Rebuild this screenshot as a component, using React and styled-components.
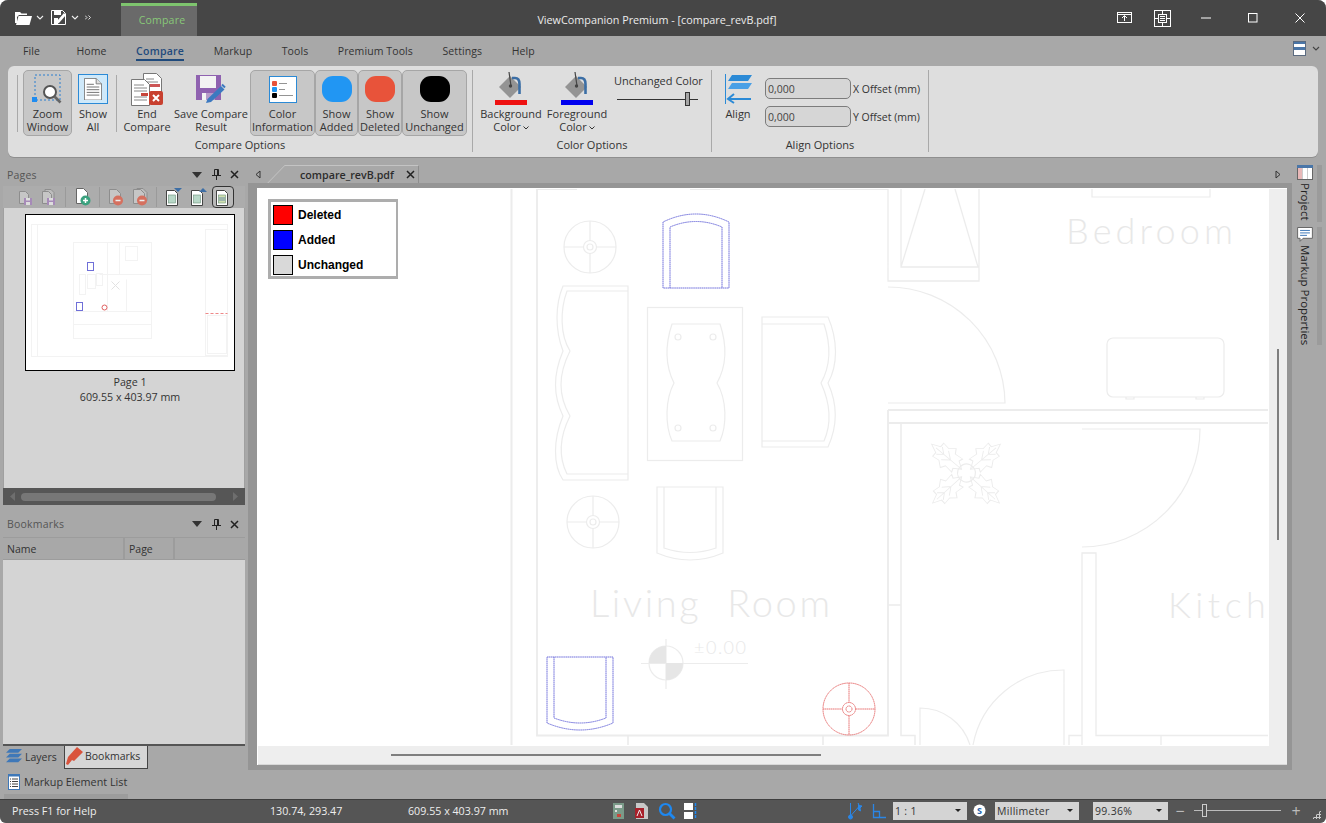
import React from "react";
import styled, { createGlobalStyle } from "styled-components";

const Global = createGlobalStyle`
  html, body { margin: 0; padding: 0; background: #fff; }
  body { font-family: "Open Sans", "Noto Sans", sans-serif; }
`;

const UI = `"Open Sans", "Noto Sans", sans-serif`;

const Window = styled.div`
  width: 1326px; height: 823px; display: flex; flex-direction: column; overflow: hidden;
  background: #a8a8a8; border-radius: 8px 8px 6px 6px; font-family: ${UI}; color: #333;
  font-size: 11px;
`;

/* ---------- title bar ---------- */
const TitleBar = styled.header`height: 36px; flex: none; background: #464646; display: flex; align-items: stretch;`;
const TitleLeft = styled.div`width: 197px; flex: none; display: flex; align-items: flex-start;`;
const Qat = styled.div`width: 121px; height: 35px; display: flex; align-items: center; padding-left: 15px; box-sizing: border-box;`;
const QatBtn = styled.span`display: inline-flex; align-items: center; margin-left: ${p => p.$ml || 0}px;`;
const ContextTab = styled.div`
  width: 76px; height: 33px; margin-top: 3px; border-top: 3px solid #7ec46e; box-sizing: border-box; padding: 0 0 2px 6px;
  background: #6a6a6a; color: #88c878; display: flex; align-items: center; justify-content: center; font-size: 10.5px; letter-spacing: .2px;
`;
const Title = styled.div`flex: 1; text-align: center; color: #ececec; line-height: 40px; font-size: 10.8px;`;
const WinControls = styled.div`width: 209px; flex: none; display: flex; align-items: center;`;
const WinBtn = styled.span`display: inline-flex; justify-content: center; width: ${p => p.$w}px;`;

/* ---------- menu ---------- */
const MenuBar = styled.nav`height: 30px; flex: none; display: flex; align-items: flex-start; padding-left: 23px; gap: 29.5px; position: relative; background: #a8a8a8;`;
const MenuItem = styled.span`
  height: 25px; box-sizing: border-box; line-height: 30px; font-size: 10.5px; color: ${p => p.$active ? "#1f4a7c" : "#333"};
  font-weight: ${p => p.$active ? 600 : 400}; margin-left: ${p => p.$ml || 0}px; letter-spacing: ${p => p.$active ? ".25px" : ".1px"};
  border-bottom: 2px solid ${p => p.$active ? "#1f4a7c" : "transparent"};
`;
const MenuRight = styled.div`position: absolute; right: 6px; top: 5px; display: flex; align-items: center; gap: 6px;`;

/* ---------- ribbon ---------- */
const Ribbon = styled.section`
  height: 91px; flex: none; margin: 0 8px; box-sizing: border-box; padding-top: 4px; background: #dedede;
  border-radius: 6px; display: flex; box-shadow: 0 1px 0 #8f8f8f;
`;
const Group = styled.div`
  width: ${p => p.$w}px; flex: none; box-sizing: border-box; border-right: 1px solid #a9a9a9; height: 82px;
  display: flex; flex-direction: column;
`;
const GroupBody = styled.div`height: 66px; display: flex; align-items: flex-start; padding-left: ${p => p.$pl || 0}px;`;
const GroupLabel = styled.div`
  margin-top: 2px; line-height: 14px; text-align: center; font-size: 11px; color: #333; padding-left: ${p => p.$pl || 0}px;
`;
const RibbonSep = styled.span`width: 1px; height: 57px; margin: 5px ${p => p.$mr || 0}px 0 ${p => p.$ml || 0}px; background: #a9a9a9; flex: none;`;
const RibbonBtn = styled.div`
  width: ${p => p.$w}px; height: 66px; flex: none; box-sizing: border-box; margin-left: ${p => p.$ml || 0}px;
  border: 1px solid ${p => p.$on ? "#a6a6a6" : "transparent"}; border-radius: 5px;
  background: ${p => p.$on ? "#c7c7c7" : "transparent"};
  display: flex; flex-direction: column; align-items: center;
`;
const IconSlot = styled.div`height: 36px; flex: none; width: 100%; display: flex; align-items: center; justify-content: center;`;
const BtnLabel = styled.div`line-height: 13px; font-size: 11px; text-align: center; white-space: pre; color: #333;`;
const ChevronMark = styled.svg`margin-left: 2px; vertical-align: 1px;`;

const SliderBlock = styled.div`width: 92px; margin-left: 5px; display: flex; flex-direction: column; align-items: flex-start;`;
const SliderLabel = styled.div`line-height: 14px; margin-top: 4px; font-size: 11px; white-space: nowrap;`;
const Track = styled.div`position: relative; width: 81px; height: 1px; background: #333; margin: 11px 0 0 3px;`;
const Thumb = styled.span`
  position: absolute; left: ${p => p.$left}px; top: -7px; width: 5px; height: 14px; box-sizing: border-box;
  background: #a5a5a5; border: 1px solid #333;
`;
const OffsetGrid = styled.div`
  display: grid; grid-template-columns: 86px auto; grid-auto-rows: 21px; row-gap: 7px; column-gap: 2px; margin: 8px 0 0 7px; align-items: center;
`;
const OffsetField = styled.div`
  height: 21px; box-sizing: border-box; border: 1px solid #7c7c7c; border-radius: 5px; background: #d6d6d6;
  line-height: 20px; padding-left: 2px; font-size: 10.5px; color: #444;
`;
const OffsetLabel = styled.span`font-size: 10.5px; white-space: nowrap; padding-top: 1px;`;

/* ---------- main ---------- */
const Main = styled.main`flex: 1; min-height: 0; display: flex;`;
const LeftCol = styled.aside`width: 248px; flex: none; box-sizing: border-box; padding: 8px 3px 0 3px; display: flex; flex-direction: column;`;
const PanelHead = styled.div`height: 20px; display: flex; align-items: center; padding: 0 6px 0 4px; color: #555; font-size: 10.5px; letter-spacing: .2px;`;
const HeadTitle = styled.span`flex: 1;`;
const HeadIcons = styled.span`display: flex; align-items: center; gap: 9px;`;
const PageTools = styled.div`height: 22px; margin-top: 1px; display: flex; align-items: center; padding-left: 11px; background: #acacac;`;
const ToolCell = styled.span`
  width: 22px; height: 22px; flex: none; display: inline-flex; align-items: center; justify-content: center; box-sizing: border-box;
  margin-left: ${p => p.$ml || 0}px; border-radius: 4px; border: 1px solid ${p => p.$on ? "#333" : "transparent"};
  background: ${p => p.$on ? "#b9b9b9" : "transparent"};
`;
const ToolSep = styled.span`width: 1px; height: 20px; flex: none; background: #9a9a9a; margin: 0 ${p => p.$mr}px 0 ${p => p.$ml}px;`;
const ThumbArea = styled.div`height: 281px; background: #d4d4d4; display: flex; flex-direction: column; align-items: center; padding: 6px 0 0 12px; box-sizing: border-box; border: solid #a0a0a0; border-width: 0 1px;`;
const PageThumb = styled.div`width: 210px; height: 157px; box-sizing: border-box; border: 1.5px solid #000; background: #fff; flex: none;`;
const PageCaption = styled.div`margin-top: 4px; line-height: 15px; font-size: 10.7px; text-align: center; color: #333;`;
const DarkScroll = styled.div`height: 17px; background: #565656; display: flex; align-items: center; padding: 0 7px; gap: 5px;`;
const DarkThumb = styled.span`flex: 1; height: 8px; margin-right: 11px; background: #777; border-radius: 4px;`;
const PanelGap = styled.div`height: 9px;`;
const ColHead = styled.div`height: 23px; margin-top: 3px; display: flex; gap: 2px; box-sizing: border-box; background: #9c9c9c; padding: 1px 0;`;
const Col = styled.div`
  width: ${p => p.$w}px; flex: ${p => p.$grow ? 1 : "none"}; box-sizing: border-box; padding-left: 4px; line-height: 23px;
  background: #a8a8a8; font-size: 10.5px; color: #333;
`;
const ListArea = styled.div`height: 184px; background: #d4d4d4; border-bottom: 2px solid #555;`;
const PaneTabs = styled.div`height: 23px; display: flex; padding-left: 1px;`;
const PaneTab = styled.div`
  display: flex; align-items: center; gap: 2px; box-sizing: border-box; width: ${p => p.$w}px; height: 23px; padding: 0 0 2px 1px; font-size: 10.5px;
  ${p => p.$on ? "background:#d6d6d6;border:1px solid #444;border-top:none;" : ""}
`;
const ElementList = styled.div`
  width: 124px; height: 28px; margin: 2px 0 0 1px; display: flex; align-items: flex-start; gap: 4px; padding: 3px 0 0 4px; box-sizing: border-box;
  font-size: 10.8px; border-bottom: 5px solid #9c9c9c; color: #333; white-space: nowrap; line-height: 16px;
`;

/* ---------- doc area ---------- */
const DocCol = styled.div`flex: 1; min-width: 0; display: flex; flex-direction: column; padding-top: 8px; box-sizing: border-box; height: 613px;`;
const TabStrip = styled.div`height: 18px; flex: none; display: flex; align-items: center; position: relative;`;
const ArrowBtn = styled.span`width: 20px; display: inline-flex; justify-content: center;`;
const DocTab = styled.div`
  position: relative; margin-left: 17px; width: 134px; height: 18px; box-sizing: border-box; border-top: 1px solid #c4c4c4; border-right: 1px solid #8e8e8e;
  display: flex; align-items: center; padding-left: 15px; justify-content: space-between; padding-right: 3px;
  font-size: 10.7px; font-weight: 600; color: #2c2c2c;
  &::before { content: ""; position: absolute; left: -9px; top: -1px; width: 17px; height: 18px; border-left: 1px solid #c4c4c4; transform: skewX(-44deg); }
`;
const StripSpace = styled.span`flex: ${p => p.$fixed ? `0 0 ${p.$fixed}px` : 1};`;
const Band = styled.div`flex: 1; min-height: 0; background: #959595; padding: 5px 5px 5px 9px; display: flex;`;
const Canvas = styled.div`flex: 1; position: relative; background: #fff; border-left: 1px solid #fff; border-top: 1px solid #fff; display: flex; flex-direction: column; overflow: hidden;`;
const CanvasTop = styled.div`flex: 1; min-height: 0; display: flex;`;
const Sheet = styled.svg`flex: none; display: block; fill: none; stroke: #ececec; stroke-width: 1;`;
const VScroll = styled.div`flex: 1; background: #eee; position: relative;`;
const VThumb = styled.span`position: absolute; left: 8px; top: 160px; width: 2px; height: 191px; background: #7f7f7f;`;
const HScroll = styled.div`height: 18px; flex: none; background: #eee; position: relative; border-bottom: 1px solid #d8d8d8;`;
const HThumb = styled.span`position: absolute; left: 133px; top: 8px; height: 2px; width: 430px; background: #7f7f7f;`;
const Legend = styled.div`
  position: absolute; left: 10px; top: 10px; width: 130px; height: 80px; box-sizing: border-box; border: 3px solid #adadad; border-right-width: 2px; background: #fff; padding: 3px 2px 0;
  display: flex; flex-direction: column; gap: 5px;
`;
const LegendRow = styled.div`display: flex; align-items: center; gap: 5px; height: 20px; font: bold 12px "Liberation Sans", Arial, sans-serif; color: #000;`;
const Swatch = styled.span`width: 20px; height: 20px; box-sizing: border-box; border: 1px solid #000; background: ${p => p.$c};`;

/* ---------- right rail ---------- */
const Rail = styled.div`width: 34px; flex: none; padding-top: 8px; box-sizing: border-box; display: flex; flex-direction: column; gap: 5px;`;
const RailTab = styled.div`
  height: ${p => p.$h}px; position: relative; display: flex; flex-direction: column; align-items: flex-start; padding-left: 5px;
  &::after { content: ""; position: absolute; right: 4px; top: 0; bottom: 0; width: 5px; background: #9b9b9b; }
`;
const RailText = styled.span`writing-mode: vertical-rl; font-size: 11.5px; color: #222; margin: 3px 0 0 0; line-height: 16px; white-space: nowrap;`;

/* ---------- status bar ---------- */
const StatusBar = styled.footer`height: 24px; flex: none; background: #555; display: flex; align-items: center; color: #eee; font-size: 10.7px; padding: 0 0 2px 12px; position: relative; border-top: 1px solid #3e3e3e; box-sizing: border-box;`;
const StatusCell = styled.span`width: ${p => p.$w}px; flex: none; white-space: nowrap;`;
const StatusIcons = styled.span`display: flex; align-items: center; gap: ${p => p.$gap}px; flex: none; margin-left: ${p => p.$ml || 0}px;`;
const Combo = styled.div`
  width: ${p => p.$w}px; height: 18px; flex: none; box-sizing: border-box; margin-left: ${p => p.$ml}px; background: #d4d4d4; color: #333;
  display: flex; align-items: center; justify-content: space-between; padding: 0 6px 0 2px; font-size: 10.5px; letter-spacing: .3px;
`;
const ComboCaret = styled.span`width: 0; height: 0; border: 3px solid transparent; border-top: 3.5px solid #222; border-bottom: 0;`;
const ZoomTrack = styled.div`position: relative; width: 87px; height: 1px; background: #bbb; margin-left: 9px; flex: none;`;
const ZoomThumb = styled.span`position: absolute; left: 8px; top: -6px; width: 5px; height: 13px; box-sizing: border-box; background: #555; border: 1px solid #ccc;`;
const StatusGlyph = styled.span`color: #bbb; font-size: 16px; line-height: 18px; margin-left: ${p => p.$ml}px; width: 10px; text-align: center;`;

/* ---------- icons ---------- */
const Chev = ({ c = "#eee", w = 8 }) => (
  <svg width={w} height="5" viewBox="0 0 8 5" fill="none"><path d="M1 1l3 3 3-3" stroke={c} strokeWidth="1.1" /></svg>
);
const FolderIcon = () => (
  <svg width="17" height="15" viewBox="0 0 17 15"><path d="M0 2h5l1.5 1.5H12V5H4L2 7v6H0z" fill="#fff" /><path d="M3.5 6H17l-2.5 9H1z" fill="#fff" /></svg>
);
const SaveAsIcon = () => (
  <svg width="16" height="15" viewBox="0 0 16 15"><path d="M.5.5h11l3 3v11H.5z" fill="#464646" stroke="#fff" /><rect x="3" y="1" width="7" height="4" fill="#fff" /><path d="M5 14l1-3 7-8 2 2-7 8z" fill="#fff" /><rect x="3" y="8" width="4" height="6" fill="#fff" /></svg>
);
const PromoteIcon = () => (
  <svg width="16" height="14" viewBox="0 0 16 14" fill="none" stroke="#fff"><rect x=".5" y="1.5" width="14" height="10" /><path d="M1 3.5h13" /><path d="M7.5 10V5M5 7l2.5-2.5L10 7" /></svg>
);
const FitIcon = () => (
  <svg width="17" height="17" viewBox="0 0 17 17" fill="none" stroke="#fff"><rect x=".5" y=".5" width="16" height="16" /><rect x="4.5" y="4.5" width="8" height="8" /><path d="M6 6.5h5M6 8.5h5M6 10.5h5M8.5 1v3M8.5 13v3M1 8.5h3M13 8.5h3" /></svg>
);
const ZoomWinIcon = () => (
  <svg width="32" height="32" viewBox="0 0 32 32" fill="none"><rect x="3" y="2" width="25" height="25" stroke="#2a7fd0" strokeDasharray="2 2" /><rect x="0" y="24" width="5" height="5" fill="#1f8cf0" /><circle cx="18" cy="19" r="6" fill="#fff" stroke="#555" strokeWidth="2" /><path d="M22.5 23.5l6 6" stroke="#666" strokeWidth="2.6" /></svg>
);
const DocLines = ({ s = 1 }) => (
  <svg width={20 * s} height={25 * s} viewBox="0 0 20 25"><path d="M.5.5h13l6 6v18H.5z" fill="#fff" stroke="#777" /><path d="M13.5.5v6h6" fill="#e0e0e0" stroke="#777" /><path d="M3 7h8M3 10h14M3 13h14M3 16h14M3 19h14" stroke="#666" /></svg>
);
const ShowAllBox = styled.span`width: 30px; height: 30px; box-sizing: border-box; display: flex; align-items: center; justify-content: center; background: #cfe9fa; border: 1px solid #2b8ad6;`;
const EndCompareIcon = () => (
  <svg width="33" height="33" viewBox="0 0 33 33"><path d="M12.500.5h13l5 5v22h-18z" fill="#fff" stroke="#777" /><path d="M15 6h8M15 9h12" stroke="#888" /><rect x="17" y="11" width="12" height="3" fill="#c55" /><path d="M.5 6.500h13l5 5v21H.5z" fill="#fff" stroke="#777" /><path d="M3 12h10M3 15h13M3 18h13M3 24h13M3 27h13" stroke="#888" /><rect x="10" y="20" width="7" height="3" fill="#c8453a" /><rect x="18" y="18" width="14" height="14" rx="2" fill="#c8402f" /><path d="M22 22l6 6M28 22l-6 6" stroke="#fff" strokeWidth="2" /></svg>
);
const SaveResultIcon = () => (
  <svg width="31" height="29" viewBox="0 0 31 29"><path d="M0 0h25v25H0z" fill="#8f62b0" /><rect x="4" y="1" width="16" height="12" fill="#f3f3f3" /><rect x="6" y="18" width="4" height="7" fill="#f3f3f3" /><rect x="10" y="18" width="9" height="7" fill="#b79ac9" /><path d="M10 28l1.500-4L25 11l3.500 3.500L15 27z" fill="#3c79c0" /><path d="M26 9.500l3 3" stroke="#3c79c0" strokeWidth="2" /></svg>
);
const ColorInfoIcon = () => (
  <svg width="28" height="27" viewBox="0 0 28 27"><rect x=".5" y=".5" width="27" height="26" fill="#fff" stroke="#2b8ad6" /><rect x="3" y="5" width="5" height="5" rx="1" fill="#e8533a" /><rect x="3" y="11" width="5" height="5" rx="1" fill="#2196f3" /><rect x="3" y="17" width="5" height="5" rx="1" fill="#000" /><path d="M10 7.500h8M10 13.500h6M10 19.500h14" stroke="#888" strokeWidth=".9" /></svg>
);
const Blob = styled.span`width: 30px; height: 26px; border-radius: 11px; background: ${p => p.$c}; display: block;`;
const BucketIcon = ({ bar }) => (
  <svg width="32" height="34" viewBox="0 0 32 34"><path d="M4 15l11-11 11 11-11 11z" fill="#949494" /><path d="M14 0l2 14" stroke="#444" strokeWidth="1.200" /><circle cx="15.500" cy="14" r="1.700" fill="#444" /><path d="M17 6h3c4 0 4.500 3 4.500 6v10" fill="none" stroke="#3b6ea5" strokeWidth="2.600" /><rect x="0" y="28" width="32" height="5" fill={bar} /></svg>
);
const AlignIcon = () => (
  <svg width="27" height="31" viewBox="0 0 27 31"><path d="M.5 0v30" stroke="#2b8ad6" /><path d="M7 1h20l-4 6H3z" fill="#2b8ad6" /><path d="M7 9h20l-4 6H3z" fill="#4aa0e6" /><path d="M3 25h23M9 20l-6 5 6 4" fill="none" stroke="#2b8ad6" strokeWidth="2" /></svg>
);
const LayoutIcon = () => (
  <svg width="13" height="15" viewBox="0 0 13 15"><rect width="13" height="15" fill="#fff" /><rect width="13" height="3" fill="#4a76a8" /><rect y="6" width="13" height="3" fill="#4a76a8" /><rect x=".5" y=".5" width="12" height="14" fill="none" stroke="#5b6b80" /></svg>
);
const DropTri = () => <svg width="12" height="6" viewBox="0 0 12 6"><path d="M1 0h10L6 6z" fill="#333" /></svg>;
const Pin = () => <svg width="9" height="11" viewBox="0 0 9 11" fill="none" stroke="#222"><path d="M2.500.5h4v6h-4zM0 6.500h9M4.500 7v4" /><path d="M5.500 1v5" /></svg>;
const CloseX = ({ c = "#222" }) => <svg width="9" height="9" viewBox="0 0 9 9"><path d="M1 1l7 7M8 1L1 8" stroke={c} strokeWidth="1.500" /></svg>;
const GrayDocSave = ({ two }) => (
  <svg width="16" height="16" viewBox="0 0 16 16">{two && <path d="M5 .5h6l3 3v7H5z" fill="#bdbdbd" stroke="#8d8d8d" />}<path d="M2.500 2.500h6l3 3v9h-9z" fill="#c6c6c6" stroke="#8d8d8d" /><rect x="7" y="9" width="8" height="7" fill="#a68ab8" /><rect x="9" y="9" width="4" height="2.500" fill="#ddd" /><rect x="9" y="13" width="4" height="3" fill="#ddd" /></svg>
);
const AddDoc = () => (
  <svg width="16" height="18" viewBox="0 0 16 18"><path d="M1.500.5h7l4 4v11h-11z" fill="#fff" stroke="#666" /><circle cx="10.500" cy="12.500" r="5" fill="#3aa17e" /><path d="M8 12.500h5M10.500 10v5" stroke="#fff" strokeWidth="1.500" /></svg>
);
const RemoveDoc = ({ two }) => (
  <svg width="17" height="18" viewBox="0 0 17 18">{two && <path d="M5 .5h6l4 4v8H5z" fill="#bdbdbd" stroke="#8d8d8d" />}<path d="M1.500 1.500h7l4 4v10h-11z" fill="#c6c6c6" stroke="#8d8d8d" /><circle cx="10" cy="12.500" r="5" fill="#d5705f" /><path d="M7.500 12.500h5" stroke="#eee" strokeWidth="1.500" /></svg>
);
const PictDoc = ({ arrow, on }) => (
  <svg width="17" height="18" viewBox="0 0 17 18"><path d="M1.500 2.500h8l3 3v12h-11z" fill="#fff" stroke="#444" /><rect x="3.500" y="7" width="7" height="8" fill={on ? "#cfe0b0" : "#b8d8c8"} stroke="#6b8f7a" strokeWidth=".6" />{arrow && <path d={arrow === "down" ? "M9 0h8l-4 4z" : "M13 0l4 4H9z"} fill="#3d6ea5" />}{on && <path d="M4 10h6M4 12h6" stroke="#6a8aa8" />}</svg>
);
const LayersIcon = () => (
  <svg width="18" height="17" viewBox="0 0 19 18"><path d="M5 1h13l-4 4H1z" fill="#3f78b8" /><path d="M5 6h13l-4 4H1z" fill="#3f78b8" /><path d="M5 11h13l-4 4H1z" fill="#3f78b8" /></svg>
);
const BookmarkIcon = () => (
  <svg width="17" height="18" viewBox="0 0 17 18"><path d="M11 0l6 5-9 9-2-1-4 5-2-1 2-7z" fill="#d9533c" /></svg>
);
const ListIcon = () => (
  <svg width="12" height="16" viewBox="0 0 12 16"><rect width="12" height="16" fill="#fff" /><rect width="12" height="2.500" fill="#3f78b8" /><path d="M.5 0v16M11.500 0v16M.5 15.500h11" stroke="#3f78b8" /><path d="M2 5h1M4 5h6M2 7.500h1M4 7.500h6M2 10h1M4 10h6M2 12.500h1M4 12.500h6" stroke="#444" /></svg>
);
const ProjectIcon = () => (
  <svg width="16" height="15" viewBox="0 0 16 15"><rect x=".5" y=".5" width="15" height="14" fill="#fff" stroke="#666" /><rect width="16" height="3" fill="#4a76a8" /><rect x="1" y="3" width="4" height="11" fill="#e8b8b8" /><path d="M5.500 3v11M10.500 3v11" stroke="#ccc" /></svg>
);
const MarkupPropIcon = () => (
  <svg width="16" height="15" viewBox="0 0 16 15"><path d="M.5.500h15v11H6l-3 3v-3H.5z" fill="#fff" stroke="#666" /><path d="M3 3.500h10M3 6h10M3 8.500h7" stroke="#3f78b8" /></svg>
);
const TinyTri = ({ dir, c = "#333" }) => (
  <svg width="6" height="9" viewBox="0 0 6 9" fill="none"><path d={dir === "left" ? "M5 1L1 4.500 5 8z" : "M1 1l4 3.500L1 8z"} stroke={c} /></svg>
);
const ScrollArrow = ({ dir }) => <svg width="6" height="9" viewBox="0 0 6 9"><path d={dir === "left" ? "M5 0v9L0 4.500z" : "M1 0v9L6 4.500z"} fill="#6e6e6e" /></svg>;
const SIcon1 = () => <svg width="14" height="18" viewBox="0 0 14 18"><rect x="1" y="1" width="11" height="16" fill="#7a9a88" /><rect x="3" y="3" width="7" height="3" fill="#ddd" /><rect x="3" y="8" width="2" height="2" fill="#ddd" /><rect x="5" y="12" width="4" height="3" fill="#c8453a" /></svg>;
const SIcon2 = () => <svg width="16" height="18" viewBox="0 0 16 18"><path d="M2 1h8l4 4v12H2z" fill="#c8c8c8" /><rect x="1" y="6" width="9" height="10" fill="#a8202a" /><path d="M3 14l2.500-6L8 14" fill="none" stroke="#eee" /></svg>;
const SIcon3 = () => <svg width="18" height="18" viewBox="0 0 18 18" fill="none"><circle cx="7.500" cy="7.500" r="5.500" stroke="#1e88f0" strokeWidth="2.200" /><path d="M11.500 11.500l5 5" stroke="#1e88f0" strokeWidth="2.800" /></svg>;
const SIcon4 = () => <svg width="13" height="18" viewBox="0 0 13 18"><rect x="0" y="1" width="9" height="7" fill="#fff" /><rect x="0" y="10" width="9" height="7" fill="#fff" /><path d="M11.500 1v16" stroke="#1e88f0" strokeWidth="1.500" strokeDasharray="3 1" /></svg>;
const SnapIcon = () => <svg width="16" height="18" viewBox="0 0 16 18" fill="none" stroke="#2a86e6"><path d="M3.500 1v14M3.500 14l9-10" /><circle cx="3.500" cy="15" r="2" fill="#2a86e6" /><path d="M11 1l1.200 2.500L15 4l-2 2 .5 3-2.500-1.500" fill="#2a86e6" /></svg>;
const OrthoIcon = () => <svg width="14" height="16" viewBox="0 0 14 16" fill="none" stroke="#2a86e6" strokeWidth="1.300"><path d="M1.500 1v13.500H14M1.500 8.500h6v6" /></svg>;
const SCircle = () => <svg width="13" height="13" viewBox="0 0 13 13"><circle cx="6.500" cy="6.500" r="6" fill="#fff" /><text x="6.500" y="9.700" fontSize="9" fontWeight="700" fontFamily="Open Sans" textAnchor="middle" fill="#1e5fa8">S</text></svg>;
const Grip = styled.span`
  position: absolute; right: 5px; bottom: 4px; width: 9px; height: 9px;
  background: radial-gradient(circle, #ccc 1px, transparent 1.2px) 0 0 / 3px 3px;
  clip-path: polygon(100% 0, 100% 100%, 0 100%);
`;

/* ---------- drawing ---------- */
const Lamp = ({ x, y, c, dash }) => (
  <g stroke={c} strokeDasharray={dash}>
    <circle cx={x} cy={y} r="26" />
    <circle cx={x} cy={y} r="6.500" />
    <circle cx={x} cy={y} r="3" />
    <path d={`M${x - 26} ${y}h19.500M${x + 6.500} ${y}h19.500M${x} ${y - 26}v19.500M${x} ${y + 6.500}v19.500`} />
  </g>
);
const Leaf = ({ r, s = 1 }) => (
  <g transform={`translate(966 473) rotate(${r}) scale(${0.95 * s} 1.45)`} strokeWidth=".8">
    <path d="M0-4L-5-9-9-8-8-14-13-16-8-20-9-25-4-25 0-31 4-25 9-25 8-20 13-16 8-14 9-8 5-9z" />
    <path d="M0-4V-27M0-14L-6-19M0-14L6-19M0-20L-5-24M0-20L5-24" />
  </g>
);
const BLUE = "#7272dc";
const Drawing = () => (
  <Sheet width="1011" height="556" viewBox="258 189 1011 556">
    <g strokeWidth="1.200">
      <path d="M511.500 189V745" strokeWidth="2" />
      <path d="M537 189V735.500H888V410" strokeWidth="1.800" />
      <path d="M537 189.500h40M690 189.500h30M810 189.500h78" />
      <path d="M628 735.500V745M823 735.500V745" strokeWidth="1.600" />
      <path d="M901 423V735.500H915V745M888 605H901" strokeWidth="1.500" />
      {/* closet */}
      <path d="M888 189V281H979V189M901 189V267H979M901 267L925 189M978 267L955 189" strokeWidth="1.300" />
      {/* upper door */}
      <path d="M888 287A117 117 0 0 1 1005 403H888" />
      <path d="M888 410H1268M888 423H1268" strokeWidth="1.800" />
      <path d="M1092 189V197H1210V189" />
      <rect x="1107" y="338" width="117" height="59" rx="6" />
      <path d="M1126 397v2h8v-2M1196 397v2h8v-2" />
      {/* lower doors */}
      <path d="M1082 429H1200A118 118 0 0 1 1082 547" />
      <path d="M1082 745V735.500H1069V745M1082 735.500V553H1096V735.500H1268M1161 735.500V745" strokeWidth="1.300" />
      <path d="M920 745V708A52 52 0 0 1 970 745" />
      <path d="M1064 745V670A92 92 0 0 0 973 745" />
      {/* furniture */}
      <path d="M628 286H563C555 305 555 330 563 351C553 375 553 395 563 416C553 440 553 465 563 480H628Z" />
      <path d="M628 291H567C560 310 560 335 570 351C558 375 558 395 570 416C558 440 560 460 567 474H628" />
      <rect x="647.500" y="307.500" width="95" height="153" />
      <path d="M672 324H720C727 345 727 365 717 383C727 400 727 425 720 441H672C665 425 665 400 674 383C665 365 665 345 672 324Z" />
      <circle cx="678" cy="337" r="3" /><circle cx="713" cy="337" r="3" /><circle cx="678" cy="428" r="3" /><circle cx="713" cy="428" r="3" />
      <path d="M762 317H828C838 340 838 365 828 383C838 405 838 425 828 447H762Z" />
      <path d="M762 324H824C831 345 831 365 821 383C831 405 831 425 824 441H762" />
      <path d="M657 487H723V553Q690 567 657 553ZM664 487V548Q690 557 716 548V487" />
      <Lamp x={590} y={247} c="#ececec" />
      <Lamp x={593} y={522} c="#ececec" />
      {/* datum */}
      <circle cx="666" cy="663" r="17" />
      <path d="M641 663.500H748M666 639V689" />
      <path d="M666 663V646A17 17 0 0 0 649 663ZM666 663V680A17 17 0 0 0 683 663Z" fill="#e6e6e6" stroke="none" />
      {/* plant */}
      <Leaf r={-50} /><Leaf r={50} /><Leaf r={132} /><Leaf r={-132} />
      <path d="M958 470A9 9 0 0 1 975 476A9 9 0 0 1 958 470" />
    </g>
    <g stroke={BLUE} strokeDasharray="1.500 .4">
      <path d="M663 288V222Q696 206 729 222V288ZM670 288V227Q696 216 722 227V288" />
      <path d="M547 657H613V723Q580 737 547 723ZM554 657V718Q580 728 606 718V657" />
    </g>
    <Lamp x={849} y={709} c="#e87474" dash="1.500 .4" />
    <g fill="#e8e8e8" stroke="none" fontFamily="Lato, 'Open Sans', sans-serif" fontWeight="300">
      <text x="590" y="617" fontSize="38" textLength="240" style={{ whiteSpace: "pre" }}>Living  Room</text>
      <text x="1066" y="244" fontSize="36" textLength="167">Bedroom</text>
      <text x="1168" y="618" fontSize="36" letterSpacing="4.500">Kitchen</text>
      <text x="694" y="654" fontSize="18" letterSpacing="1.500">±0.00</text>
    </g>
  </Sheet>
);
const ThumbPlan = () => (
  <svg width="207" height="154" viewBox="26.500 215.500 207 154" fill="none" stroke="#f3f3f3" style={{ display: "block" }}>
    <rect x="32" y="225" width="196" height="132" />
    <path d="M38 225V357" />
    <rect x="206" y="230" width="22" height="126" />
    <rect x="74" y="243" width="78" height="96" />
    <path d="M74 312H152M74 325H152M108 243V312M120 243V275M100 275H152M127 280V312" />
    <rect x="126" y="247" width="12" height="14" />
    <rect x="80" y="275" width="6" height="20" /><rect x="88" y="275" width="8" height="14" /><rect x="97" y="274" width="6" height="12" />
    <path d="M112 282l8 8M120 282l-8 8" stroke="#e2e2e2" />
    <path d="M206 314h22" stroke="#e88" strokeDasharray="3 2" strokeWidth="1.200" />
    <rect x="208" y="316" width="19" height="38" />
    <rect x="88" y="263" width="6" height="8" stroke="#6f6fd8" />
    <rect x="77" y="303" width="6" height="8" stroke="#6f6fd8" />
    <circle cx="105" cy="308" r="2.500" stroke="#e06060" />
  </svg>
);

export default function App() {
  return (
    <Window>
      <Global />
      <TitleBar>
        <TitleLeft>
          <Qat>
            <QatBtn><FolderIcon /></QatBtn>
            <QatBtn $ml={4}><Chev /></QatBtn>
            <QatBtn $ml={7}><SaveAsIcon /></QatBtn>
            <QatBtn $ml={4}><Chev /></QatBtn>
            <QatBtn $ml={6}><svg width="6" height="5" viewBox="0 0 6 5" fill="none" stroke="#ddd"><path d="M0 .5l2 2-2 2M3.500 .5l2 2-2 2" /></svg></QatBtn>
          </Qat>
          <ContextTab>Compare</ContextTab>
        </TitleLeft>
        <Title>ViewCompanion Premium - [compare_revB.pdf]</Title>
        <WinControls>
          <WinBtn $w={16}><PromoteIcon /></WinBtn>
          <WinBtn $w={21} />
          <WinBtn $w={17}><FitIcon /></WinBtn>
          <WinBtn $w={30} />
          <WinBtn $w={10}><svg width="10" height="10" viewBox="0 0 10 10"><path d="M0 5h10" stroke="#fff" /></svg></WinBtn>
          <WinBtn $w={37} />
          <WinBtn $w={10}><svg width="10" height="10" viewBox="0 0 10 10"><rect x=".5" y=".5" width="8.500" height="8.500" fill="none" stroke="#fff" /></svg></WinBtn>
          <WinBtn $w={37} />
          <WinBtn $w={10}><svg width="10" height="10" viewBox="0 0 10 10"><path d="M.5.500l9 9M9.500.500l-9 9" stroke="#fff" /></svg></WinBtn>
        </WinControls>
      </TitleBar>

      <MenuBar>
        <MenuItem>File</MenuItem>
        <MenuItem $ml={7}>Home</MenuItem>
        <MenuItem $active>Compare</MenuItem>
        <MenuItem>Markup</MenuItem>
        <MenuItem>Tools</MenuItem>
        <MenuItem>Premium Tools</MenuItem>
        <MenuItem>Settings</MenuItem>
        <MenuItem>Help</MenuItem>
        <MenuRight><LayoutIcon /><Chev c="#444" /></MenuRight>
      </MenuBar>

      <Ribbon>
        <Group $w={465}>
          <GroupBody $pl={9}>
            <RibbonSep $mr={5} />
            <RibbonBtn $w={49} $on><IconSlot><ZoomWinIcon /></IconSlot><BtnLabel>{"Zoom\nWindow"}</BtnLabel></RibbonBtn>
            <RibbonBtn $w={36} $ml={3}><IconSlot><ShowAllBox><DocLines s={0.9} /></ShowAllBox></IconSlot><BtnLabel>{"Show\nAll"}</BtnLabel></RibbonBtn>
            <RibbonSep $ml={5} $mr={7} />
            <RibbonBtn $w={46}><IconSlot><EndCompareIcon /></IconSlot><BtnLabel>{"End\nCompare"}</BtnLabel></RibbonBtn>
            <RibbonBtn $w={72} $ml={5}><IconSlot><SaveResultIcon /></IconSlot><BtnLabel>{"Save Compare\nResult"}</BtnLabel></RibbonBtn>
            <RibbonBtn $w={65} $ml={3} $on><IconSlot><ColorInfoIcon /></IconSlot><BtnLabel>{"Color\nInformation"}</BtnLabel></RibbonBtn>
            <RibbonBtn $w={43} $on><IconSlot><Blob $c="#2196f3" /></IconSlot><BtnLabel>{"Show\nAdded"}</BtnLabel></RibbonBtn>
            <RibbonBtn $w={44} $on><IconSlot><Blob $c="#e8533a" /></IconSlot><BtnLabel>{"Show\nDeleted"}</BtnLabel></RibbonBtn>
            <RibbonBtn $w={65} $on><IconSlot><Blob $c="#000" /></IconSlot><BtnLabel>{"Show\nUnchanged"}</BtnLabel></RibbonBtn>
          </GroupBody>
          <GroupLabel>Compare Options</GroupLabel>
        </Group>
        <Group $w={239}>
          <GroupBody $pl={4}>
            <RibbonBtn $w={68}><IconSlot><BucketIcon bar="#ee1111" /></IconSlot><BtnLabel>Background{"\n"}Color<ChevronMark width="6" height="4" viewBox="0 0 6 4" fill="none"><path d="M.5.500L3 3 5.500.500" stroke="#333" /></ChevronMark></BtnLabel></RibbonBtn>
            <RibbonBtn $w={64}><IconSlot><BucketIcon bar="#0000ee" /></IconSlot><BtnLabel>Foreground{"\n"}Color<ChevronMark width="6" height="4" viewBox="0 0 6 4" fill="none"><path d="M.5.500L3 3 5.500.500" stroke="#333" /></ChevronMark></BtnLabel></RibbonBtn>
            <SliderBlock>
              <SliderLabel>Unchanged Color</SliderLabel>
              <Track><Thumb $left={68} /></Track>
            </SliderBlock>
          </GroupBody>
          <GroupLabel>Color Options</GroupLabel>
        </Group>
        <Group $w={217}>
          <GroupBody $pl={6}>
            <RibbonBtn $w={40}><IconSlot><AlignIcon /></IconSlot><BtnLabel>Align</BtnLabel></RibbonBtn>
            <OffsetGrid>
              <OffsetField>0,000</OffsetField><OffsetLabel>X Offset (mm)</OffsetLabel>
              <OffsetField>0,000</OffsetField><OffsetLabel>Y Offset (mm)</OffsetLabel>
            </OffsetGrid>
          </GroupBody>
          <GroupLabel>Align Options</GroupLabel>
        </Group>
      </Ribbon>

      <Main>
        <LeftCol>
          <PanelHead>
            <HeadTitle>Pages</HeadTitle>
            <HeadIcons><DropTri /><Pin /><CloseX /></HeadIcons>
          </PanelHead>
          <PageTools>
            <ToolCell><GrayDocSave /></ToolCell>
            <ToolCell $ml={1}><GrayDocSave two /></ToolCell>
            <ToolSep $ml={6} $mr={6} />
            <ToolCell><AddDoc /></ToolCell>
            <ToolSep $ml={5} $mr={5} />
            <ToolCell><RemoveDoc /></ToolCell>
            <ToolCell $ml={2}><RemoveDoc two /></ToolCell>
            <ToolSep $ml={5} $mr={5} />
            <ToolCell><PictDoc arrow="down" /></ToolCell>
            <ToolCell $ml={3}><PictDoc arrow="up" /></ToolCell>
            <ToolCell $ml={3} $on><PictDoc on /></ToolCell>
          </PageTools>
          <ThumbArea>
            <PageThumb><ThumbPlan /></PageThumb>
            <PageCaption>Page 1<br />609.55 x 403.97 mm</PageCaption>
          </ThumbArea>
          <DarkScroll><ScrollArrow dir="left" /><DarkThumb /><ScrollArrow dir="right" /></DarkScroll>
          <PanelGap />
          <PanelHead>
            <HeadTitle>Bookmarks</HeadTitle>
            <HeadIcons><DropTri /><Pin /><CloseX /></HeadIcons>
          </PanelHead>
          <ColHead>
            <Col $w={120}>Name</Col>
            <Col $w={48}>Page</Col>
            <Col $grow />
          </ColHead>
          <ListArea />
          <PaneTabs>
            <PaneTab $w={60}><LayersIcon />Layers</PaneTab>
            <PaneTab $w={84} $on><BookmarkIcon />Bookmarks</PaneTab>
          </PaneTabs>
          <ElementList><ListIcon />Markup Element List</ElementList>
        </LeftCol>

        <DocCol>
          <TabStrip>
            <ArrowBtn><TinyTri dir="left" /></ArrowBtn>
            <DocTab>compare_revB.pdf<CloseX c="#222" /></DocTab>
            <StripSpace />
            <ArrowBtn><TinyTri dir="right" /></ArrowBtn>
            <StripSpace $fixed={4} />
          </TabStrip>
          <Band>
            <Canvas>
              <CanvasTop>
                <Drawing />
                <VScroll><VThumb /></VScroll>
              </CanvasTop>
              <HScroll><HThumb /></HScroll>
              <Legend>
                <LegendRow><Swatch $c="#ff0000" />Deleted</LegendRow>
                <LegendRow><Swatch $c="#0000ff" />Added</LegendRow>
                <LegendRow><Swatch $c="#d9d9d9" />Unchanged</LegendRow>
              </Legend>
            </Canvas>
          </Band>
        </DocCol>

        <Rail>
          <RailTab $h={57}><ProjectIcon /><RailText>Project</RailText></RailTab>
          <RailTab $h={118}><MarkupPropIcon /><RailText>Markup Properties</RailText></RailTab>
        </Rail>
      </Main>

      <StatusBar>
        <StatusCell $w={258}>Press F1 for Help</StatusCell>
        <StatusCell $w={138}>130.74, 293.47</StatusCell>
        <StatusCell $w={204}>609.55 x 403.97 mm</StatusCell>
        <StatusIcons $gap={8}><SIcon1 /><SIcon2 /><SIcon3 /><SIcon4 /></StatusIcons>
        <StatusCell $w={150} />
        <StatusIcons $gap={9}><SnapIcon /><OrthoIcon /></StatusIcons>
        <Combo $w={74} $ml={7}>1 : 1<ComboCaret /></Combo>
        <StatusIcons $gap={0} $ml={6}><SCircle /></StatusIcons>
        <Combo $w={84} $ml={9}>Millimeter<ComboCaret /></Combo>
        <Combo $w={75} $ml={14}>99.36%<ComboCaret /></Combo>
        <StatusGlyph $ml={7}>−</StatusGlyph>
        <ZoomTrack><ZoomThumb /></ZoomTrack>
        <StatusGlyph $ml={10}>+</StatusGlyph>
        <Grip />
      </StatusBar>
    </Window>
  );
}
